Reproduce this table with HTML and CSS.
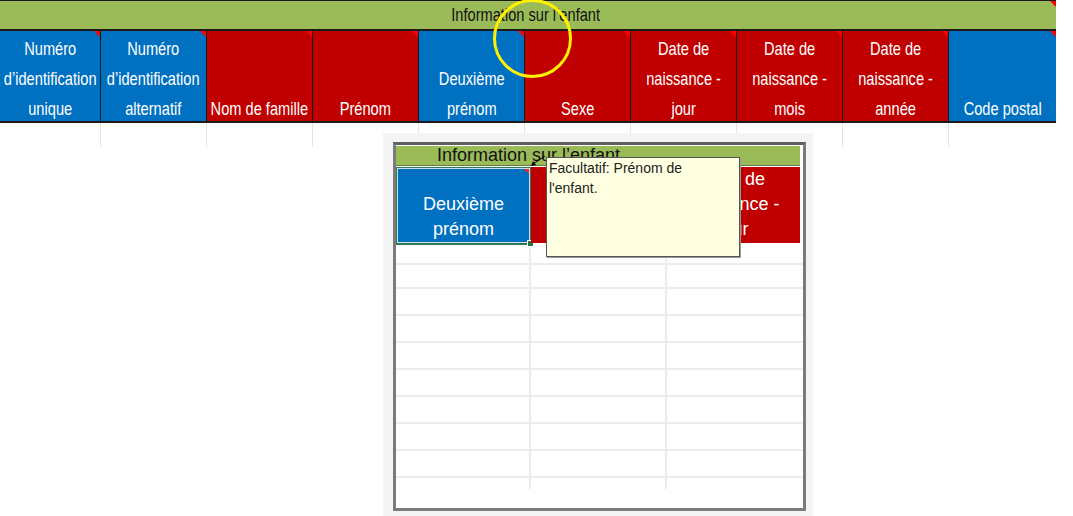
FILE: index.html
```html
<!DOCTYPE html>
<html lang="fr">
<head>
<meta charset="utf-8">
<title>Information sur l'enfant</title>
<link rel="stylesheet" href="styles.css">
</head>
<body>
<div class="sheet">
  <div class="title-row"><span class="nar">Information sur l’enfant</span><i class="note"></i></div>
  <div class="header-row">
    <div class="hc blue"><span class="nar">Numéro<br>d’identification<br>unique</span><i class="note"></i></div>
    <div class="hc blue"><span class="nar">Numéro<br>d’identification<br>alternatif</span><i class="note"></i></div>
    <div class="hc red"><span class="nar">Nom de famille</span><i class="note"></i></div>
    <div class="hc red"><span class="nar">Prénom</span><i class="note"></i></div>
    <div class="hc blue"><span class="nar">Deuxième<br>prénom</span><i class="note"></i></div>
    <div class="hc red"><span class="nar">Sexe</span><i class="note"></i></div>
    <div class="hc red"><span class="nar">Date de<br>naissance -<br>jour</span><i class="note"></i></div>
    <div class="hc red"><span class="nar">Date de<br>naissance -<br>mois</span><i class="note"></i></div>
    <div class="hc red"><span class="nar">Date de<br>naissance -<br>année</span><i class="note"></i></div>
    <div class="hc blue"><span class="nar">Code postal</span><i class="note"></i></div>
  </div>
  <div class="blank-row">
    <div></div><div></div><div></div><div></div><div></div><div></div><div></div><div></div><div></div><div></div>
  </div>
</div>

<div class="circle"></div>

<div class="inset">
  <div class="frame">
    <div class="i-title">Information sur l’enfant</div>
    <div class="i-head">
      <div class="ic blue sel"><span>Deuxième<br>prénom</span><i class="inote"></i><i class="handle"></i></div>
      <div class="ic red"><span>Sexe</span></div>
      <div class="ic red"><span>Date de<br>naissance -<br>jour</span></div>
    </div>
    <div class="i-rows">
      <div class="r"><div></div><div></div><div></div></div>
      <div class="r"><div></div><div></div><div></div></div>
      <div class="r"><div></div><div></div><div></div></div>
      <div class="r"><div></div><div></div><div></div></div>
      <div class="r"><div></div><div></div><div></div></div>
      <div class="r"><div></div><div></div><div></div></div>
      <div class="r"><div></div><div></div><div></div></div>
      <div class="r"><div></div><div></div><div></div></div>
      <div class="r"><div></div><div></div><div></div></div>
      <div class="r last"><div></div><div></div><div></div></div>
    </div>
    <svg class="arrow" width="20" height="16" viewBox="0 0 20 16">
      <line x1="17" y1="2" x2="5" y2="10" stroke="#000" stroke-width="1"/>
      <polygon points="3,12 5,7 8,11" fill="#000"/>
    </svg>
    <div class="tip">Facultatif: Prénom de<br>l'enfant.</div>
  </div>
</div>
</body>
</html>
```

FILE: styles.css
```css
html, body {
  margin: 0;
  padding: 0;
  background: #ffffff;
}

body {
  width: 1073px;
  height: 516px;
  overflow: hidden;
  position: relative;
  font-family: "Liberation Sans", Arial, sans-serif;
}

.sheet {
  width: 1056px;
  font-family: "Liberation Sans", Arial, sans-serif;
  font-size: 19px;
}

.nar {
  display: inline-block;
  transform: scaleX(0.77);
  transform-origin: 50% 50%;
  white-space: nowrap;
}

.title-row {
  position: relative;
  height: 31px;
  box-sizing: border-box;
  border-top: 1px solid #1a1a1a;
  border-bottom: 2px solid #1a1a1a;
  background: #9bbb59;
  text-align: center;
  color: #111;
  line-height: 26px;
  padding-top: 1px;
  padding-right: 4px;
}

.header-row {
  display: grid;
  grid-template-columns: 101px repeat(8, 106px) 107px;
  height: 92px;
  box-sizing: border-box;
  border-bottom: 2px solid #1a1a1a;
}

.hc {
  position: relative;
  display: flex;
  align-items: flex-end;
  justify-content: center;
  text-align: center;
  color: #ffffff;
  line-height: 30px;
  border-right: 1px solid #1a1a1a;
}

.hc:last-child {
  border-right: none;
}

.hc .nar {
  margin-bottom: -3px;
  flex-shrink: 0;
}

.blue {
  background: #0070c0;
}

.red {
  background: #c00000;
}

.note {
  position: absolute;
  top: 0;
  right: 0;
  width: 0;
  height: 0;
  border-top: 6px solid #ff0000;
  border-left: 6px solid transparent;
}

.blank-row {
  display: grid;
  grid-template-columns: 101px repeat(8, 106px) 107px;
  height: 24px;
}

.blank-row div {
  border-right: 1px solid #e3e3e3;
}

.blank-row div:last-child {
  border-right: none;
}

.circle {
  position: absolute;
  left: 493px;
  top: -1px;
  width: 73px;
  height: 73px;
  border: 3px solid #fff200;
  border-radius: 50%;
}

.inset {
  position: absolute;
  left: 383px;
  top: 133px;
  width: 430px;
  height: 383px;
  box-sizing: border-box;
  background: #f4f4f4;
  padding: 9px 7px 5px 10px;
}

.frame {
  position: relative;
  height: 369px;
  box-sizing: border-box;
  border: 3px solid #7b7b7b;
  border-top-color: #5e5e5e;
  background: #ffffff;
  font-family: "Liberation Sans", Arial, sans-serif;
  font-size: 18px;
}

.i-title {
  width: 404px;
  height: 20px;
  margin-top: 1px;
  box-sizing: border-box;
  background: #9bbb59;
  border-bottom: 1px solid #5f7f45;
  color: #111;
  line-height: 19px;
  padding-left: 41px;
  white-space: nowrap;
  overflow: hidden;
}

.i-head {
  display: grid;
  grid-template-columns: 135px 136px 133px;
  height: 74px;
  box-sizing: border-box;
  padding-top: 1px;
}

.ic {
  position: relative;
  display: flex;
  align-items: flex-end;
  justify-content: center;
  text-align: center;
  color: #ffffff;
  line-height: 25px;
  box-sizing: border-box;
  padding-bottom: 1px;
  margin-bottom: 2px;
}

.ic span {
  white-space: nowrap;
}

.sel {
  margin-bottom: 0;
  border: 1px solid #2f7a4e;
  border-bottom-width: 2px;
  box-shadow: inset 0 0 0 1px #c9ddf0;
}

.inote {
  position: absolute;
  top: 1px;
  right: 1px;
  width: 0;
  height: 0;
  border-top: 5px solid #ff2020;
  border-left: 5px solid transparent;
}

.handle {
  position: absolute;
  right: -4px;
  bottom: -4px;
  width: 5px;
  height: 5px;
  background: #217346;
  border: 1px solid #ffffff;
}

.i-rows {
  display: flex;
  flex-direction: column;
}

.r {
  display: grid;
  grid-template-columns: 135px 136px 133px;
  height: 27px;
  box-sizing: border-box;
  border-bottom: 2px solid #ececec;
}

.r:first-child {
  height: 25px;
}

.r:nth-child(2) {
  height: 24px;
}

.r.last {
  height: 11px;
  border-bottom: none;
}

.r div {
  border-right: 2px solid #ececec;
}

.r div:last-child {
  border-right: none;
}

.arrow {
  position: absolute;
  left: 132px;
  top: 9px;
}

.tip {
  position: absolute;
  left: 150px;
  top: 12px;
  width: 194px;
  height: 100px;
  box-sizing: border-box;
  background: #ffffe1;
  border: 1px solid #555555;
  box-shadow: 1px 1px 0 #9a9a9a;
  padding: 0 0 0 2px;
  font-family: "Liberation Sans", Arial, sans-serif;
  font-size: 14px;
  line-height: 20px;
  color: #222;
}
```
